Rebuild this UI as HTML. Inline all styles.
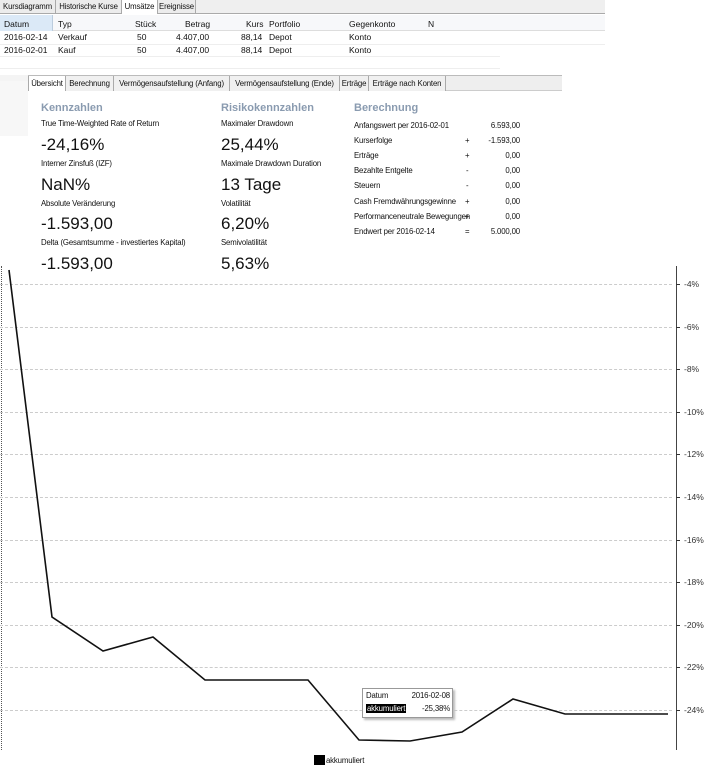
<!DOCTYPE html>
<html><head><meta charset="utf-8"><style>
*{margin:0;padding:0;box-sizing:border-box}
body{width:710px;height:770px;background:#fff;font-family:"Liberation Sans",sans-serif;font-size:8px;color:#111;position:relative;overflow:hidden}
.a{position:absolute;white-space:nowrap}
.tab{position:absolute;top:0;height:13px;border-right:1px solid #aaa;padding:2px 0 0;font-size:7.8px;letter-spacing:-0.15px;background:#ececec;white-space:nowrap;overflow:hidden;text-align:center}
.st{position:absolute;top:76px;height:15px;border-right:1px solid #aaa;padding:3px 0 0;font-size:7.8px;letter-spacing:-0.15px;background:#f0f0f0;white-space:nowrap;overflow:hidden;text-align:center}
.h{color:#8a9bb0;font-weight:bold;font-size:11px}
.big{font-size:17px;color:#111}
.gl{position:absolute;left:0;width:672px;border-top:1px dashed #ccc;height:0}
.yl{position:absolute;left:684px;font-size:8.5px;color:#333}
.tk{position:absolute;left:676px;width:4px;border-top:1px solid #333}
.r{position:absolute;text-align:right;white-space:nowrap}
.c{font-size:7.8px;letter-spacing:-0.15px}
</style></head><body>
<div class="a" style="left:0;top:0;width:605px;height:14px;background:#efefef;border-bottom:1px solid #aaa"></div>
<div class="tab" style="left:0;width:56px">Kursdiagramm</div>
<div class="tab" style="left:56px;width:66px">Historische Kurse</div>
<div class="tab" style="left:122px;width:36px;background:#fff;height:14px">Umsätze</div>
<div class="tab" style="left:158px;width:38px">Ereignisse</div>
<div class="a" style="left:0;top:15px;width:605px;height:16px;background:#f7f8fa;border-bottom:1px solid #ddd"></div>
<div class="a" style="left:0;top:15px;width:53px;height:16px;background:#dbe9f7;border-right:1px solid #bcd"></div>
<div class="a" style="left:4px;top:19px;font-size:8.5px">Datum</div>
<div class="a" style="left:58px;top:19px;font-size:8.5px">Typ</div>
<div class="a" style="left:135px;top:19px;font-size:8.5px">Stück</div>
<div class="a" style="left:185px;top:19px;font-size:8.5px">Betrag</div>
<div class="a" style="left:246px;top:19px;font-size:8.5px">Kurs</div>
<div class="a" style="left:269px;top:19px;font-size:8.5px">Portfolio</div>
<div class="a" style="left:349px;top:19px;font-size:8.5px">Gegenkonto</div>
<div class="a" style="left:428px;top:19px;font-size:8.5px">N</div>
<div class="a" style="left:0;top:44px;width:605px;border-top:1px solid #eee"></div>
<div class="a" style="left:0;top:56px;width:500px;border-top:1px solid #eee"></div>
<div class="a" style="left:0;top:68px;width:500px;border-top:1px solid #eee"></div>
<div class="a" style="left:4px;top:32px;font-size:8.5px">2016-02-14</div>
<div class="a" style="left:58px;top:32px;font-size:8.5px">Verkauf</div>
<div class="a" style="left:137px;top:32px;font-size:8.5px">50</div>
<div class="a" style="left:176px;top:32px;font-size:8.5px">4.407,00</div>
<div class="a" style="left:241px;top:32px;font-size:8.5px">88,14</div>
<div class="a" style="left:269px;top:32px;font-size:8.5px">Depot</div>
<div class="a" style="left:349px;top:32px;font-size:8.5px">Konto</div>
<div class="a" style="left:4px;top:45px;font-size:8.5px">2016-02-01</div>
<div class="a" style="left:58px;top:45px;font-size:8.5px">Kauf</div>
<div class="a" style="left:137px;top:45px;font-size:8.5px">50</div>
<div class="a" style="left:176px;top:45px;font-size:8.5px">4.407,00</div>
<div class="a" style="left:241px;top:45px;font-size:8.5px">88,14</div>
<div class="a" style="left:269px;top:45px;font-size:8.5px">Depot</div>
<div class="a" style="left:349px;top:45px;font-size:8.5px">Konto</div>
<div class="a" style="left:0;top:75px;width:28px;height:6px;background:#f4f4f4"></div>
<div class="a" style="left:0;top:81px;width:28px;height:55px;background:#f7f7f7"></div>
<div class="a" style="left:28px;top:75px;width:534px;height:16px;background:#eee;border-top:1px solid #bbb;border-bottom:1px solid #ccc"></div>
<div class="st" style="left:28px;width:38px;background:#fff;border-left:1px solid #aaa">Übersicht</div>
<div class="st" style="left:66px;width:48px">Berechnung</div>
<div class="st" style="left:114px;width:116px">Vermögensaufstellung (Anfang)</div>
<div class="st" style="left:230px;width:110px">Vermögensaufstellung (Ende)</div>
<div class="st" style="left:340px;width:29px">Erträge</div>
<div class="st" style="left:369px;width:77px">Erträge nach Konten</div>
<div class="a h" style="left:41px;top:102px">Kennzahlen</div>
<div class="a c" style="left:41px;top:119px">True Time-Weighted Rate of Return</div>
<div class="a big" style="left:41px;top:135px">-24,16%</div>
<div class="a c" style="left:41px;top:159px">Interner Zinsfuß (IZF)</div>
<div class="a big" style="left:41px;top:175px">NaN%</div>
<div class="a c" style="left:41px;top:199px">Absolute Veränderung</div>
<div class="a big" style="left:41px;top:214px">-1.593,00</div>
<div class="a c" style="left:41px;top:238px">Delta (Gesamtsumme - investiertes Kapital)</div>
<div class="a big" style="left:41px;top:254px">-1.593,00</div>
<div class="a h" style="left:221px;top:102px">Risikokennzahlen</div>
<div class="a c" style="left:221px;top:119px">Maximaler Drawdown</div>
<div class="a big" style="left:221px;top:135px">25,44%</div>
<div class="a c" style="left:221px;top:159px">Maximale Drawdown Duration</div>
<div class="a big" style="left:221px;top:175px">13 Tage</div>
<div class="a c" style="left:221px;top:199px">Volatilität</div>
<div class="a big" style="left:221px;top:214px">6,20%</div>
<div class="a c" style="left:221px;top:238px">Semivolatilität</div>
<div class="a big" style="left:221px;top:254px">5,63%</div>
<div class="a h" style="left:354px;top:102px">Berechnung</div>
<div class="a c" style="left:354px;top:121px">Anfangswert per 2016-02-01</div><div class="r c" style="right:190px;top:121px">6.593,00</div>
<div class="a c" style="left:354px;top:136px">Kurserfolge</div><div class="a c" style="left:465px;top:136px">+</div><div class="r c" style="right:190px;top:136px">-1.593,00</div>
<div class="a c" style="left:354px;top:151px">Erträge</div><div class="a c" style="left:465px;top:151px">+</div><div class="r c" style="right:190px;top:151px">0,00</div>
<div class="a c" style="left:354px;top:166px">Bezahlte Entgelte</div><div class="a c" style="left:466px;top:166px">-</div><div class="r c" style="right:190px;top:166px">0,00</div>
<div class="a c" style="left:354px;top:181px">Steuern</div><div class="a c" style="left:466px;top:181px">-</div><div class="r c" style="right:190px;top:181px">0,00</div>
<div class="a c" style="left:354px;top:197px">Cash Fremdwährungsgewinne</div><div class="a c" style="left:465px;top:197px">+</div><div class="r c" style="right:190px;top:197px">0,00</div>
<div class="a c" style="left:354px;top:212px">Performanceneutrale Bewegungen</div><div class="a c" style="left:465px;top:212px">+</div><div class="r c" style="right:190px;top:212px">0,00</div>
<div class="a c" style="left:354px;top:227px">Endwert per 2016-02-14</div><div class="a c" style="left:465px;top:227px">=</div><div class="r c" style="right:190px;top:227px">5.000,00</div>
<div class="a" style="left:1px;top:266px;height:484px;border-left:1px dotted #555"></div>
<div class="a" style="left:676px;top:266px;height:484px;border-left:1px solid #444"></div>
<div class="gl" style="top:284px"></div><div class="tk" style="top:284px"></div><div class="yl" style="top:279px">-4%</div>
<div class="gl" style="top:327px"></div><div class="tk" style="top:327px"></div><div class="yl" style="top:322px">-6%</div>
<div class="gl" style="top:369px"></div><div class="tk" style="top:369px"></div><div class="yl" style="top:364px">-8%</div>
<div class="gl" style="top:412px"></div><div class="tk" style="top:412px"></div><div class="yl" style="top:407px">-10%</div>
<div class="gl" style="top:454px"></div><div class="tk" style="top:454px"></div><div class="yl" style="top:449px">-12%</div>
<div class="gl" style="top:497px"></div><div class="tk" style="top:497px"></div><div class="yl" style="top:492px">-14%</div>
<div class="gl" style="top:540px"></div><div class="tk" style="top:540px"></div><div class="yl" style="top:535px">-16%</div>
<div class="gl" style="top:582px"></div><div class="tk" style="top:582px"></div><div class="yl" style="top:577px">-18%</div>
<div class="gl" style="top:625px"></div><div class="tk" style="top:625px"></div><div class="yl" style="top:620px">-20%</div>
<div class="gl" style="top:667px"></div><div class="tk" style="top:667px"></div><div class="yl" style="top:662px">-22%</div>
<div class="gl" style="top:710px"></div><div class="tk" style="top:710px"></div><div class="yl" style="top:705px">-24%</div>
<svg class="a" style="left:0;top:0" width="710" height="770"><polyline fill="none" stroke="#111" stroke-width="1.6" points="9,270 52,617 103,651 153,637 205,680 308,680 359,740 410,741 462,732 513,699 565,714 668,714"/></svg>
<div class="a" style="left:362px;top:688px;width:91px;height:30px;background:#fff;border:1px solid #999;box-shadow:2px 2px 2px #bbb"></div>
<div class="a c" style="left:366px;top:691px">Datum</div><div class="r c" style="right:260px;top:691px">2016-02-08</div>
<div class="a c" style="left:366px;top:704px;background:#000;color:#fff;padding:0 1px">akkumuliert</div><div class="r c" style="right:260px;top:704px">-25,38%</div>
<div class="a" style="left:314px;top:755px;width:11px;height:10px;background:#000"></div>
<div class="a c" style="left:326px;top:756px">akkumuliert</div>
</body></html>
